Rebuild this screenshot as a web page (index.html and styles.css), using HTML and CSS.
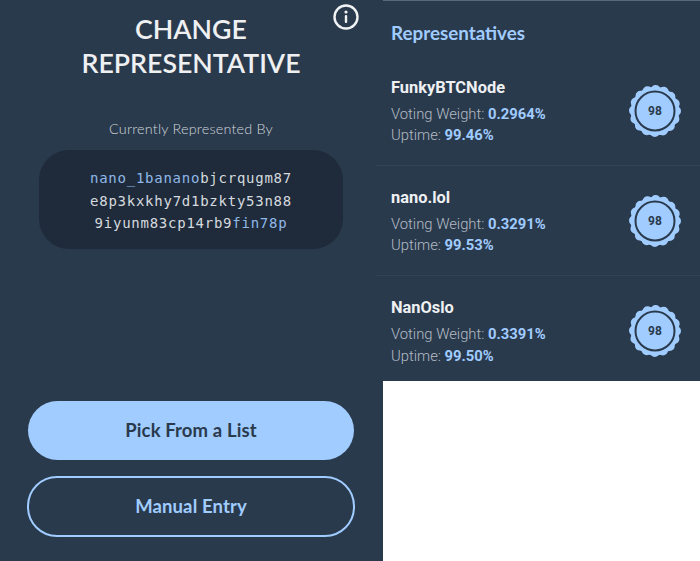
FILE: index.html
```html
<!DOCTYPE html>
<html lang="en">
<head>
<meta charset="utf-8">
<title>Change Representative</title>
<link rel="stylesheet" href="styles.css">
</head>
<body>
<main class="screen">
  <section class="change">
    <button class="info" aria-label="Info">
      <svg width="28" height="28" viewBox="0 0 28 28"><circle cx="14" cy="14" r="11.5" fill="none" stroke="#f0f2f4" stroke-width="2.4"/><circle cx="14" cy="9" r="1.6" fill="#f0f2f4"/><rect x="12.8" y="12" width="2.4" height="8" rx="1" fill="#f0f2f4"/></svg>
    </button>
    <h1 class="title">CHANGE<br>REPRESENTATIVE</h1>
    <p class="caption">Currently Represented By</p>
    <div class="address">
      <div><span class="hl">nano_1banano</span>bjcrqugm87</div>
      <div>e8p3kxkhy7d1bzkty53n88</div>
      <div>9iyunm83cp14rb9<span class="hl">fin78p</span></div>
    </div>
    <div class="actions">
      <button class="btn btn-solid">Pick From a List</button>
      <button class="btn btn-outline">Manual Entry</button>
    </div>
  </section>
  <section class="reps">
    <h2 class="reps-title">Representatives</h2>
    <article class="rep">
      <div class="rep-info">
        <h3 class="rep-name">FunkyBTCNode</h3>
        <p class="rep-line">Voting Weight: <b>0.2964%</b></p>
        <p class="rep-line">Uptime: <b>99.46%</b></p>
      </div>
      <div class="badge"><svg width="52" height="52" viewBox="0 0 52 52"><circle cx="26" cy="26" r="21" fill="none" stroke="#a0ccff" stroke-width="10" stroke-linecap="round" stroke-dasharray="0 8.247"/><circle cx="26" cy="26" r="24.3" fill="#a0ccff"/><circle cx="26" cy="26" r="19.5" fill="none" stroke="#2a3a4d" stroke-width="2"/></svg><span class="score">98</span></div>
    </article>
    <article class="rep">
      <div class="rep-info">
        <h3 class="rep-name">nano.lol</h3>
        <p class="rep-line">Voting Weight: <b>0.3291%</b></p>
        <p class="rep-line">Uptime: <b>99.53%</b></p>
      </div>
      <div class="badge"><svg width="52" height="52" viewBox="0 0 52 52"><circle cx="26" cy="26" r="21" fill="none" stroke="#a0ccff" stroke-width="10" stroke-linecap="round" stroke-dasharray="0 8.247"/><circle cx="26" cy="26" r="24.3" fill="#a0ccff"/><circle cx="26" cy="26" r="19.5" fill="none" stroke="#2a3a4d" stroke-width="2"/></svg><span class="score">98</span></div>
    </article>
    <article class="rep rep-last">
      <div class="rep-info">
        <h3 class="rep-name">NanOslo</h3>
        <p class="rep-line">Voting Weight: <b>0.3391%</b></p>
        <p class="rep-line">Uptime: <b>99.50%</b></p>
      </div>
      <div class="badge"><svg width="52" height="52" viewBox="0 0 52 52"><circle cx="26" cy="26" r="21" fill="none" stroke="#a0ccff" stroke-width="10" stroke-linecap="round" stroke-dasharray="0 8.247"/><circle cx="26" cy="26" r="24.3" fill="#a0ccff"/><circle cx="26" cy="26" r="19.5" fill="none" stroke="#2a3a4d" stroke-width="2"/></svg><span class="score">98</span></div>
    </article>
  </section>
</main>
</body>
</html>
```
FILE: styles.css
```css
* { box-sizing: border-box; }
html, body { margin: 0; background: #fff; }
body { width: 700px; height: 561px; overflow: hidden; }
.screen { display: flex; align-items: flex-start; width: 700px; height: 561px; }

.change {
  position: relative;
  flex: 0 0 383px;
  height: 561px;
  background: #2a3a4d;
  color: #eef0f2;
  font-family: Lato, sans-serif;
  display: flex;
  flex-direction: column;
  align-items: center;
  padding: 12px 1px 0 0;
}
.info {
  position: absolute;
  top: 3px; left: 332px;
  padding: 0; border: 0; background: none; line-height: 0;
}
.title {
  margin: 0;
  font-size: 26.7px;
  line-height: 34px;
  font-weight: 600;
  text-align: center;
  color: #eef0f2;
}
.caption {
  margin: 39px 0 0;
  font-size: 14.4px;
  line-height: 20px;
  font-weight: 300;
  color: #d0d5da;
  letter-spacing: 0.2px;
}
.address {
  margin-top: 11px;
  width: 304px;
  height: 99px;
  padding-top: 3px;
  border-radius: 30px;
  background: #1f2b3b;
  display: flex;
  flex-direction: column;
  align-items: center;
  justify-content: center;
  font-family: "DejaVu Sans Mono", monospace;
  font-size: 14px;
  line-height: 22.4px;
  letter-spacing: 0.75px;
  color: #d6dade;
}
.hl { color: #8fb8e8; }
.actions {
  margin-top: auto;
  margin-bottom: 24px;
  display: flex;
  flex-direction: column;
  align-items: center;
  gap: 16px;
  width: 100%;
}
.btn {
  height: 59px;
  padding: 0 0 2px;
  border-radius: 30px;
  font-family: Lato, sans-serif;
  font-size: 18.5px;
  letter-spacing: 0.12px;
  font-weight: 700;
}
.btn-solid { width: 326px; background: #a0ccff; color: #2a3a4d; border: 0; }
.btn-outline { width: 328px; height: 61px; background: transparent; color: #a0ccff; border: 2px solid #a0ccff; }

.reps {
  flex: 0 0 317px;
  height: 381px;
  background: #2a3a4d;
  border-top: 1px solid #5a6878;
  display: flex;
  flex-direction: column;
}
.reps-title {
  margin: 20px 0 0 8px;
  font-family: Lato, sans-serif;
  font-size: 18.8px;
  line-height: 24px;
  font-weight: 700;
  color: #a0ccff;
}
.rep {
  position: relative;
  flex: none;
  display: flex;
  align-items: center;
  justify-content: space-between;
  height: 110px;
  margin-left: -7px;
  padding: 0 19px 0 15px;
  border-bottom: 1px solid #324358;
  font-family: Roboto, sans-serif;
}
.reps-title + .rep { height: 121px; padding-top: 11px; }
.rep-last { border-bottom: 0; height: 105px; padding-top: 5px; }
.rep-info { padding-top: 2px; }
.rep-name {
  margin: 0 0 6px;
  font-size: 16.4px;
  line-height: 21px;
  font-weight: 700;
  color: #eef0f2;
}
.rep-line {
  margin: 0;
  font-size: 14.8px;
  line-height: 21.5px;
  font-weight: 300;
  color: #b4bbc4;
}
.rep-line b { font-weight: 700; color: #a0ccff; }
.badge { position: relative; width: 52px; height: 52px; line-height: 0; }
.score {
  position: absolute;
  inset: 0;
  display: flex;
  align-items: center;
  justify-content: center;
  font-family: Roboto, sans-serif;
  font-size: 12px;
  line-height: 52px;
  font-weight: 700;
  color: #2a3a4d;
}
```
